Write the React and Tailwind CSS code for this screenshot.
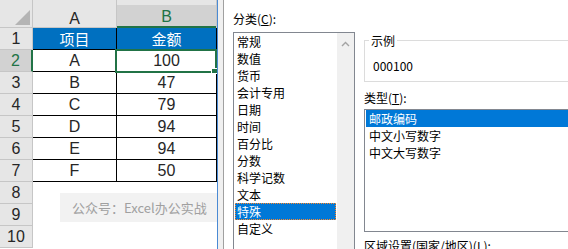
import React from 'react';

const rows = [
  ['项目', '金额'],
  ['A', '100'],
  ['B', '47'],
  ['C', '79'],
  ['D', '94'],
  ['E', '94'],
  ['F', '50'],
];

const categories = ['常规', '数值', '货币', '会计专用', '日期', '时间', '百分比', '分数', '科学记数', '文本', '特殊', '自定义'];
const types = ['邮政编码', '中文小写数字', '中文大写数字'];

function Sheet() {
  return (
    <div className="relative w-[217px] h-full shrink-0 overflow-hidden bg-white text-[16px] text-[#262626] font-['Liberation_Sans','Noto_Sans_CJK_SC',sans-serif]">
      {/* column headers */}
      <div className="flex h-[28px]">
        <div className="relative w-[33px] bg-[#e6e6e6] border-r border-b border-[#c6c6c6]">
          <svg className="absolute left-[15px] top-[10px]" width="15" height="15" viewBox="0 0 15 15">
            <polygon points="0,15 15,0 15,15" fill="#b4b4b4" />
          </svg>
        </div>
        <div className="w-[84px] bg-[#e6e6e6] border-r border-b border-[#c6c6c6] text-center leading-[18px] pt-[10px]">A</div>
        <div className="w-[100px] flex flex-col border-r border-[#c6c6c6]">
          <div className="h-[7px] bg-[#e6e6e6]" />
          <div className="flex-1 bg-[#d2d2d2] border-b-2 border-[#217346] text-center text-[#217346] leading-[18px] pt-[3px]">B</div>
        </div>
      </div>

      {/* rows */}
      {Array.from({ length: 10 }).map((_, i) => {
        const data = rows[i];
        const active = i === 1;
        return (
          <div key={i} className="flex h-[22px]">
            <div
              className={
                active
                  ? 'w-[33px] bg-[#d2d2d2] text-[#217346] border-b border-[#c6c6c6] border-r-2 border-r-[#217346] text-center leading-[21px]'
                  : 'w-[33px] bg-[#e6e6e6] border-b border-r border-[#c6c6c6] text-center leading-[21px]'
              }
            >
              {i + 1}
            </div>
            {data ? (
              <>
                <div
                  className={
                    i === 0
                      ? "w-[84px] bg-[#0070c0] text-white border-r border-b border-black text-center leading-[21px] text-[15px] font-['Noto_Sans_CJK_SC',sans-serif]"
                      : 'w-[84px] border-r border-b border-black text-center leading-[21px]'
                  }
                >
                  {data[0]}
                </div>
                <div
                  className={
                    i === 0
                      ? "w-[100px] bg-[#0070c0] text-white border-r border-b border-black text-center leading-[21px] text-[15px] font-['Noto_Sans_CJK_SC',sans-serif]"
                      : 'w-[100px] border-r border-b border-black text-center leading-[21px]'
                  }
                >
                  {data[1]}
                </div>
              </>
            ) : (
              <div className="w-[184px]" />
            )}
          </div>
        );
      })}

      {/* active cell B2 */}
      <div className="absolute left-[115px] top-[49px] w-[102px] h-[24px] border-2 border-[#217346]" />
      <div className="absolute left-[211px] top-[68px] w-[7px] h-[6px] bg-[#217346] border border-white" />

      {/* watermark */}
      <div className="absolute left-[60px] top-[193px] w-[160px] h-[29px] bg-[#f2f2f2] pl-[12px] text-[13px] leading-[29px] text-[#a0a0a0] font-['Noto_Sans_CJK_SC',sans-serif]">
        公众号：Excel办公实战
      </div>
    </div>
  );
}

function Dialog() {
  return (
    <div className="flex-1 h-full bg-white overflow-hidden flex items-start gap-[9px] pl-[9px] text-[12px] leading-[17px] text-black font-['Noto_Sans_CJK_SC',sans-serif]">
      {/* category list */}
      <div className="w-[122px] shrink-0 pt-[10px]">
        <div className="h-[17px]">
          分类(<span className="underline">C</span>):
        </div>
        <div className="mt-[5px] h-[240px] flex border border-[#828790]">
          <div className="w-[103px] px-px">
            {categories.map((c) => (
              <div
                key={c}
                className={
                  c === '特殊'
                    ? 'h-[17px] px-px border border-dotted border-[#ff8728] bg-[#0078d7] text-white leading-[15px]'
                    : 'h-[17px] px-[2px]'
                }
              >
                {c}
              </div>
            ))}
          </div>
          <div className="w-[17px] bg-[#f0f0f0] flex justify-center pt-[8px]">
            <svg width="9" height="6" viewBox="0 0 9 6">
              <path d="M1 5 L4.5 1.5 L8 5" fill="none" stroke="#a3a3a3" strokeWidth="1.4" />
            </svg>
          </div>
        </div>
      </div>

      {/* sample + type */}
      <div className="w-[260px] shrink-0 pt-[40px]">
        <div className="relative h-[42px] border border-[#dcdcdc]">
          <span className="absolute left-[4px] -top-[9px] px-[2px] bg-white">示例</span>
          <div className="pt-[16px] pl-[8px]">000100</div>
        </div>
        <div className="mt-[7px] h-[17px]">
          类型(<span className="underline">T</span>):
        </div>
        <div className="mt-[3px] h-[123px] border border-[#828790] px-px">
          {types.map((t, i) => (
            <div
              key={t}
              className={i === 0 ? 'h-[17px] pl-[3px] bg-[#0078d7] text-white' : 'h-[17px] pl-[3px]'}
            >
              {t}
            </div>
          ))}
        </div>
        <div className="mt-[5px] h-[17px]">
          区域设置(国家/地区)(<span className="underline">L</span>):
        </div>
      </div>
    </div>
  );
}

export default function App() {
  return (
    <div className="w-[568px] h-[249px] overflow-hidden flex bg-white">
      <Sheet />
      <div className="w-px h-full bg-[#4a8ad4]" />
      <div className="w-[6px] h-full bg-[#f0f0f0] border-r border-[#a0a0a0]" />
      <Dialog />
    </div>
  );
}
